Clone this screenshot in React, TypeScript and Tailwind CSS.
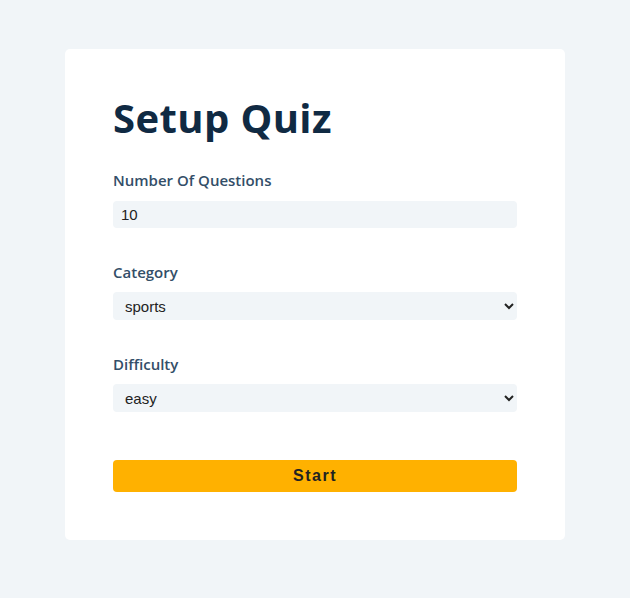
import React from "react";

export default function App() {
  return (
    <div className="min-h-[598px] w-full bg-[#f1f5f8] pt-[49px]" style={{ fontFamily: '"Open Sans", sans-serif' }}>
      <div className="mx-auto w-[500px] rounded-[5px] bg-white px-[48px] pt-[41px] pb-[48px]">
        <h2 className="text-[40px] font-bold leading-[56px] tracking-[0.4px] text-[#102a43]">Setup Quiz</h2>
        <div className="mt-[23px] flex flex-col">
          <label className="block text-[15px] font-semibold leading-[22px] text-[#334e68]">Number Of Questions</label>
          <input
            defaultValue="10"
            className="mt-[10px] h-[27px] w-full rounded-[4px] bg-[#f1f5f8] px-[8px] text-[15px] text-[#222] outline-none"
            style={{ fontFamily: '"Liberation Sans", Arial, sans-serif' }}
          />
          <label className="mt-[33px] block text-[15px] font-semibold leading-[22px] text-[#334e68]">Category</label>
          <select
            defaultValue="sports"
            className="mt-[9px] h-[28px] w-full rounded-[4px] bg-[#f1f5f8] px-[8px] text-[15px] text-[#222] outline-none"
            style={{ fontFamily: '"Liberation Sans", Arial, sans-serif' }}
          >
            <option value="sports">sports</option>
            <option value="history">history</option>
            <option value="politics">politics</option>
          </select>
          <label className="mt-[33px] block text-[15px] font-semibold leading-[22px] text-[#334e68]">Difficulty</label>
          <select
            defaultValue="easy"
            className="mt-[9px] h-[28px] w-full rounded-[4px] bg-[#f1f5f8] px-[8px] text-[15px] text-[#222] outline-none"
            style={{ fontFamily: '"Liberation Sans", Arial, sans-serif' }}
          >
            <option value="easy">easy</option>
            <option value="medium">medium</option>
            <option value="hard">hard</option>
          </select>
          <button
            className="mt-[48px] h-[32px] w-full rounded-[4px] bg-[#ffb100] text-[16px] font-bold tracking-[1.5px] text-[#222]"
            style={{ fontFamily: '"Liberation Sans", Arial, sans-serif' }}
          >
            Start
          </button>
        </div>
      </div>
    </div>
  );
}
